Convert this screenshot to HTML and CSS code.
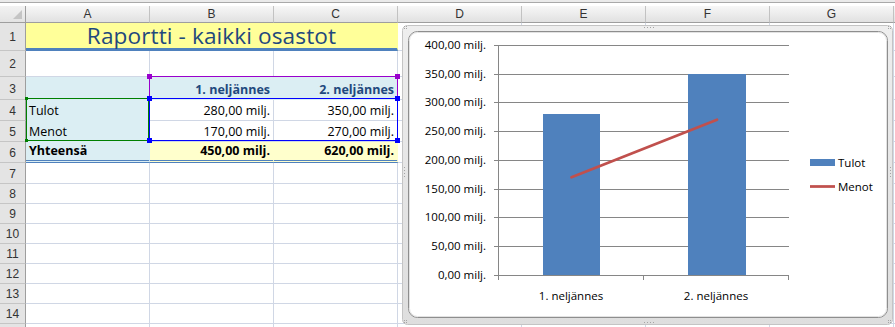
FILE: index.html
```html
<!DOCTYPE html>
<html lang="fi">
<head>
<meta charset="utf-8">
<title>Raportti</title>
<link rel="stylesheet" href="styles.css">
</head>
<body>
<div class="app">
  <div class="topstrip"><div class="fbar"></div></div>
  <div class="sheet">
    <div class="corner"></div>
    <div class="ch">A</div><div class="ch">B</div><div class="ch">C</div><div class="ch">D</div><div class="ch">E</div><div class="ch">F</div><div class="ch">G</div><div class="ch"></div>

    <div class="rh">1</div>
    <div class="c title">Raportti - kaikki osastot</div>
    <div class="c"></div><div class="c"></div><div class="c"></div><div class="c"></div><div class="c"></div>

    <div class="rh">2</div>
    <div class="c"></div><div class="c"></div><div class="c"></div><div class="c"></div><div class="c"></div><div class="c"></div><div class="c"></div><div class="c"></div>

    <div class="rh">3</div>
    <div class="c blue"></div><div class="c blue hdr num">1. neljännes</div><div class="c blue hdr num">2. neljännes</div>
    <div class="c"></div><div class="c"></div><div class="c"></div><div class="c"></div><div class="c"></div>

    <div class="rh">4</div>
    <div class="c blue txt">Tulot</div><div class="c num">280,00 milj.</div><div class="c num">350,00 milj.</div>
    <div class="c"></div><div class="c"></div><div class="c"></div><div class="c"></div><div class="c"></div>

    <div class="rh">5</div>
    <div class="c blue txt">Menot</div><div class="c num">170,00 milj.</div><div class="c num">270,00 milj.</div>
    <div class="c"></div><div class="c"></div><div class="c"></div><div class="c"></div><div class="c"></div>

    <div class="rh">6</div>
    <div class="c blue txt total">Yhteensä</div><div class="c yel num total">450,00 milj.</div><div class="c yel num total">620,00 milj.</div>
    <div class="c"></div><div class="c"></div><div class="c"></div><div class="c"></div><div class="c"></div>

    <div class="rh">7</div>
    <div class="c"></div><div class="c"></div><div class="c"></div><div class="c"></div><div class="c"></div><div class="c"></div><div class="c"></div><div class="c"></div>
    <div class="rh">8</div>
    <div class="c"></div><div class="c"></div><div class="c"></div><div class="c"></div><div class="c"></div><div class="c"></div><div class="c"></div><div class="c"></div>
    <div class="rh">9</div>
    <div class="c"></div><div class="c"></div><div class="c"></div><div class="c"></div><div class="c"></div><div class="c"></div><div class="c"></div><div class="c"></div>
    <div class="rh">10</div>
    <div class="c"></div><div class="c"></div><div class="c"></div><div class="c"></div><div class="c"></div><div class="c"></div><div class="c"></div><div class="c"></div>
    <div class="rh">11</div>
    <div class="c"></div><div class="c"></div><div class="c"></div><div class="c"></div><div class="c"></div><div class="c"></div><div class="c"></div><div class="c"></div>
    <div class="rh">12</div>
    <div class="c"></div><div class="c"></div><div class="c"></div><div class="c"></div><div class="c"></div><div class="c"></div><div class="c"></div><div class="c"></div>
    <div class="rh">13</div>
    <div class="c"></div><div class="c"></div><div class="c"></div><div class="c"></div><div class="c"></div><div class="c"></div><div class="c"></div><div class="c"></div>
    <div class="rh">14</div>
    <div class="c"></div><div class="c"></div><div class="c"></div><div class="c"></div><div class="c"></div><div class="c"></div><div class="c"></div><div class="c"></div>
    <div class="rh"></div>
    <div class="c"></div><div class="c"></div><div class="c"></div><div class="c"></div><div class="c"></div><div class="c"></div><div class="c"></div><div class="c"></div>
  </div>

  <div class="sel sel-purple"><i class="h tl"></i><i class="h tr"></i><i class="h bl"></i><i class="h br"></i></div>
  <div class="sel sel-green"><i class="h tl"></i><i class="h tr"></i><i class="h bl"></i><i class="h br"></i></div>
  <div class="sel sel-blue"><i class="h tl"></i><i class="h tr"></i><i class="h bl"></i><i class="h br"></i></div>

  <div class="chart">
    <svg width="495" height="304" viewBox="0 0 495 304">
      <defs>
        <linearGradient id="frame" x1="0" y1="0" x2="0" y2="1">
          <stop offset="0" stop-color="#eeeeee"/>
          <stop offset="1" stop-color="#dedede"/>
        </linearGradient>
      </defs>
      <rect x="2.5" y="2.5" width="490" height="299" rx="5" fill="url(#frame)" stroke="#c4c4c4"/>
      <rect x="8.5" y="8.5" width="479" height="286" rx="9" fill="#ffffff" stroke="#8e8e8e"/>
      <rect x="9.5" y="9.5" width="477" height="284" rx="8" fill="none" stroke="#e2e2e2"/>
      <g fill="#a4a4a4">
        <rect x="4" y="3" width="1" height="1"/><rect x="6" y="3" width="1" height="1"/><rect x="4" y="5" width="1" height="1"/><rect x="6" y="5" width="1" height="1"/>
        <rect x="488" y="3" width="1" height="1"/><rect x="490" y="3" width="1" height="1"/><rect x="488" y="5" width="1" height="1"/><rect x="490" y="5" width="1" height="1"/>
        <rect x="4" y="297" width="1" height="1"/><rect x="6" y="297" width="1" height="1"/><rect x="4" y="299" width="1" height="1"/><rect x="6" y="299" width="1" height="1"/>
        <rect x="488" y="297" width="1" height="1"/><rect x="490" y="297" width="1" height="1"/><rect x="488" y="299" width="1" height="1"/><rect x="490" y="299" width="1" height="1"/>
        <rect x="244" y="4" width="1" height="1"/><rect x="247" y="4" width="1" height="1"/><rect x="250" y="4" width="1" height="1"/><rect x="253" y="4" width="1" height="1"/>
        <rect x="244" y="299" width="1" height="1"/><rect x="247" y="299" width="1" height="1"/><rect x="250" y="299" width="1" height="1"/><rect x="253" y="299" width="1" height="1"/>
        <rect x="4" y="144" width="1" height="1"/><rect x="4" y="147" width="1" height="1"/><rect x="4" y="150" width="1" height="1"/><rect x="4" y="153" width="1" height="1"/>
        <rect x="490" y="144" width="1" height="1"/><rect x="490" y="147" width="1" height="1"/><rect x="490" y="150" width="1" height="1"/><rect x="490" y="153" width="1" height="1"/>
      </g>
      <g stroke="#868686" stroke-width="1" fill="none">
        <line x1="94" y1="22.5" x2="389" y2="22.5"/>
        <line x1="94" y1="51.5" x2="389" y2="51.5"/>
        <line x1="94" y1="79.5" x2="389" y2="79.5"/>
        <line x1="94" y1="108.5" x2="389" y2="108.5"/>
        <line x1="94" y1="137.5" x2="389" y2="137.5"/>
        <line x1="94" y1="166.5" x2="389" y2="166.5"/>
        <line x1="94" y1="194.5" x2="389" y2="194.5"/>
        <line x1="94" y1="223.5" x2="389" y2="223.5"/>
      </g>
      <rect x="143" y="91" width="57" height="161" fill="#4f81bd"/>
      <rect x="288" y="51" width="58" height="201" fill="#4f81bd"/>
      <g stroke="#868686" stroke-width="1" fill="none">
        <line x1="98.5" y1="22" x2="98.5" y2="253"/>
        <line x1="94" y1="252.5" x2="389" y2="252.5"/>
        <line x1="98.5" y1="252" x2="98.5" y2="257"/>
        <line x1="243.5" y1="252" x2="243.5" y2="257"/>
        <line x1="388.5" y1="252" x2="388.5" y2="257"/>
      </g>
      <line x1="171.5" y1="154.25" x2="317" y2="96.75" stroke="#c0504d" stroke-width="2.75" stroke-linecap="round"/>
      <g class="axis" text-anchor="end">
        <text x="86" y="26">400,00 milj.</text>
        <text x="86" y="55">350,00 milj.</text>
        <text x="86" y="83">300,00 milj.</text>
        <text x="86" y="112">250,00 milj.</text>
        <text x="86" y="141">200,00 milj.</text>
        <text x="86" y="170">150,00 milj.</text>
        <text x="86" y="198">100,00 milj.</text>
        <text x="86" y="227">50,00 milj.</text>
        <text x="86" y="256">0,00 milj.</text>
      </g>
      <g class="axis" text-anchor="middle">
        <text x="171" y="277">1. neljännes</text>
        <text x="316" y="277">2. neljännes</text>
      </g>
      <rect x="410" y="136" width="25" height="7" fill="#4f81bd"/>
      <line x1="410" y1="163.5" x2="435" y2="163.5" stroke="#c0504d" stroke-width="2.75"/>
      <g class="axis legend">
        <text x="438" y="143.5">Tulot</text>
        <text x="438" y="167.5">Menot</text>
      </g>
    </svg>
  </div>
</div>
</body>
</html>
```

FILE: styles.css
```css
* { box-sizing: border-box; }
html, body { margin: 0; padding: 0; background: #ffffff; }
body { width: 895px; height: 327px; overflow: hidden; }

.app {
  position: relative;
  width: 895px;
  height: 327px;
  overflow: hidden;
  font-family: "Open Sans", "Liberation Sans", sans-serif;
}

.topstrip {
  height: 6px;
  border-top: 2px solid #eaeaea;
  position: relative;
}
.fbar {
  height: 1px;
  background: #a9a9a9;
}

.sheet {
  display: grid;
  grid-template-columns: 26px repeat(8, 124px);
  grid-template-rows: 17px 28px 26px 23px 21px 21px 21px 21px 20px 20px 20px 20px 20px 20px 20px 20px;
}

.corner {
  position: relative;
  background: linear-gradient(#f2f2f2, #e3e3e3);
  border-right: 1px solid #9e9e9e;
  border-bottom: 1px solid #9e9e9e;
}
.corner::after {
  content: "";
  position: absolute;
  right: 3px;
  bottom: 3px;
  width: 0;
  height: 0;
  border-left: 9px solid transparent;
  border-bottom: 9px solid #c4c4c4;
}

.ch {
  display: flex;
  align-items: center;
  justify-content: center;
  background: linear-gradient(#f7f7f7, #e1e1e1);
  border-right: 1px solid #c2c2c2;
  border-bottom: 1px solid #9e9e9e;
  font-family: "Liberation Sans", Arial, sans-serif;
  font-size: 12px;
  color: #333333;
}

.rh {
  display: flex;
  align-items: center;
  justify-content: center;
  background: #e4e4e4;
  border-right: 1px solid #9e9e9e;
  border-bottom: 1px solid #c5c5c5;
  font-family: "Liberation Sans", Arial, sans-serif;
  font-size: 12px;
  color: #333333;
  padding-top: 1px;
}

.c {
  border-right: 1px solid #d0d7e5;
  border-bottom: 1px solid #d0d7e5;
  font-size: 12.5px;
  color: #000000;
  display: flex;
  align-items: flex-end;
  padding: 0 3px 1px 3px;
  white-space: nowrap;
}

.title {
  grid-column: span 3;
  background: #ffff99;
  border-right-color: #ffff99;
  border-bottom: 3px solid #4f81bd;
  justify-content: center;
  align-items: center;
  font-size: 22.6px;
  color: #1f497d;
  padding: 0 0 1px 0;
  letter-spacing: 0.1px;
}

.blue { background: #dbeef3; border-color: #dbeef3; }
.yel { background: #ffffcc; border-right-color: #ffffcc; }

.num { justify-content: flex-end; }
.txt { justify-content: flex-start; }
.hdr { font-weight: 700; color: #1f497d; }
.total { font-weight: 700; border-bottom: 3px double #4f81bd; }

.sel {
  position: absolute;
  border: 1px solid;
}
.sel-purple { left: 149px; top: 76px; width: 249px; height: 23px; border-color: #9900cc; }
.sel-green  { left: 26px;  top: 98px; width: 123px; height: 43px; border-color: #008000; }
.sel-blue   { left: 149px; top: 98px; width: 249px; height: 43px; border-color: #0000ff; }

.h {
  position: absolute;
  width: 5px;
  height: 5px;
}
.sel-purple .h { background: #9900cc; }
.sel-green .h { background: #008000; width: 3px; height: 3px; }
.sel-blue .h { background: #0000ff; }
.h.tl { left: -3px; top: -3px; }
.h.tr { right: -3px; top: -3px; }
.h.bl { left: -3px; bottom: -3px; }
.h.br { right: -3px; bottom: -3px; }
.sel-green .h.tl { left: -2px; top: -2px; }
.sel-green .h.tr { right: -2px; top: -2px; }
.sel-green .h.bl { left: -2px; bottom: -2px; }
.sel-green .h.br { right: -2px; bottom: -2px; }

.chart {
  position: absolute;
  left: 400px;
  top: 23px;
  width: 495px;
  height: 304px;
}
.chart svg { display: block; }
.axis {
  font-family: "Open Sans", "Liberation Sans", sans-serif;
  font-size: 11.5px;
  fill: #000000;
}
```
